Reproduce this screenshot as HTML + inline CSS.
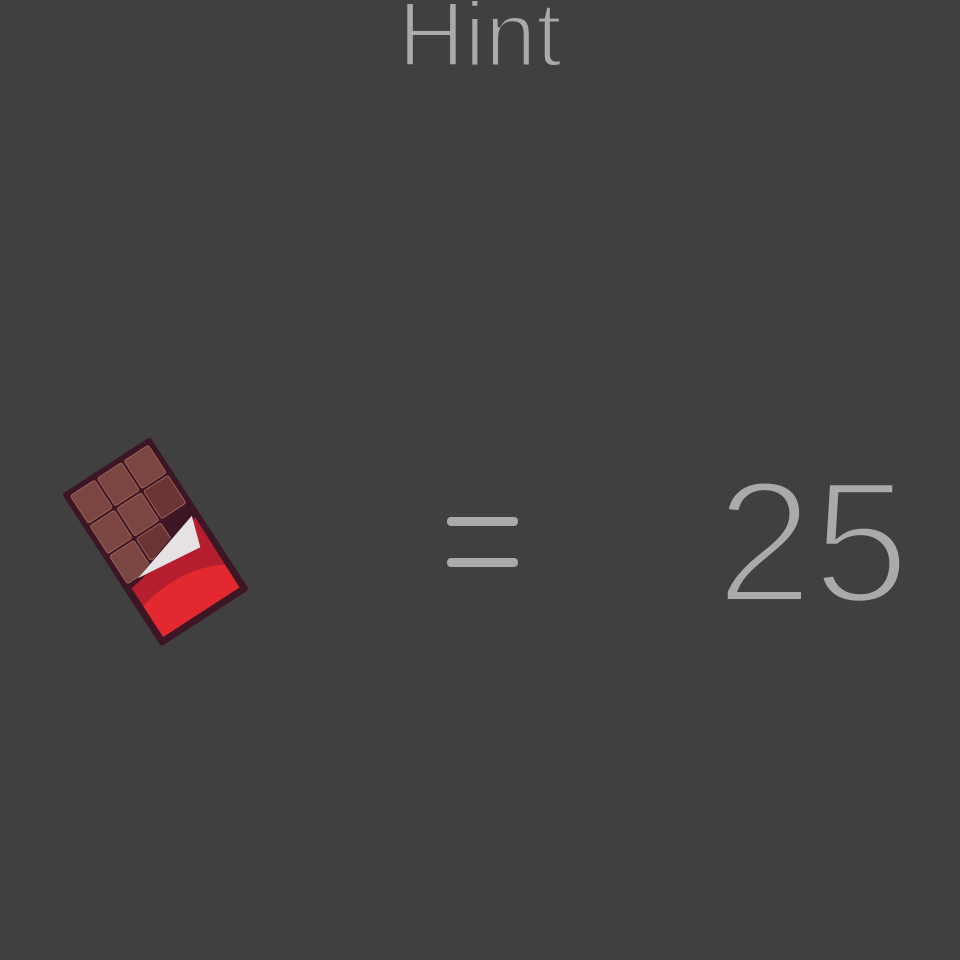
<!DOCTYPE html>
<html><head><meta charset="utf-8"><style>
html,body{margin:0;padding:0;background:#404040;}
body{width:960px;height:960px;position:relative;overflow:hidden;font-family:"Liberation Sans",sans-serif;}
.t{position:absolute;color:#a9abaa;white-space:nowrap;line-height:1;}
#hint{left:0;width:960px;text-align:center;top:-11px;font-size:92px;-webkit-text-stroke:3px #404040;}
#num{left:716px;top:455px;font-size:174px;-webkit-text-stroke:6px #404040;}
.bar{position:absolute;left:447px;width:71px;height:9px;border-radius:4px;background:#a9abaa;}
</style></head><body>
<div class="t" id="hint">Hint</div>
<div class="bar" style="top:517px"></div>
<div class="bar" style="top:558px"></div>
<div class="t" id="num">25</div>
<svg width="960" height="960" style="position:absolute;left:0;top:0">
<g transform="translate(62,494) rotate(-33)">
<rect x="0" y="0" width="105" height="182" fill="#3d1626" rx="3"/>
<g fill="#7b4642" stroke="#9a6256" stroke-width="1">
<rect x="6" y="6" width="29" height="33" rx="2"/>
<rect x="38" y="6" width="29" height="33" rx="2"/>
<rect x="70" y="6" width="29" height="33" rx="2"/>
<rect x="6" y="42" width="29" height="33" rx="2"/>
<rect x="38" y="42" width="29" height="33" rx="2"/>
<rect x="70" y="42" width="29" height="33" fill="#6a3434" rx="2"/>
<rect x="6" y="78" width="29" height="33" rx="2"/>
<rect x="38" y="78" width="29" height="26" fill="#6a3434" rx="2"/>
</g>
<polygon points="4,115 18,112 99,86 101,86 101,178 4,178" fill="#3d1626"/>
<polygon points="7,117 20,115 99,92 98,175 7,175" fill="#b51f2d"/>
<path d="M7,138 Q60,126 98,148 L98,175 L7,175 Z" fill="#e4282f"/>
<polygon points="18,112 97,89 87,120" fill="#e6e2e4"/>
</g>
</svg>
</body></html>
